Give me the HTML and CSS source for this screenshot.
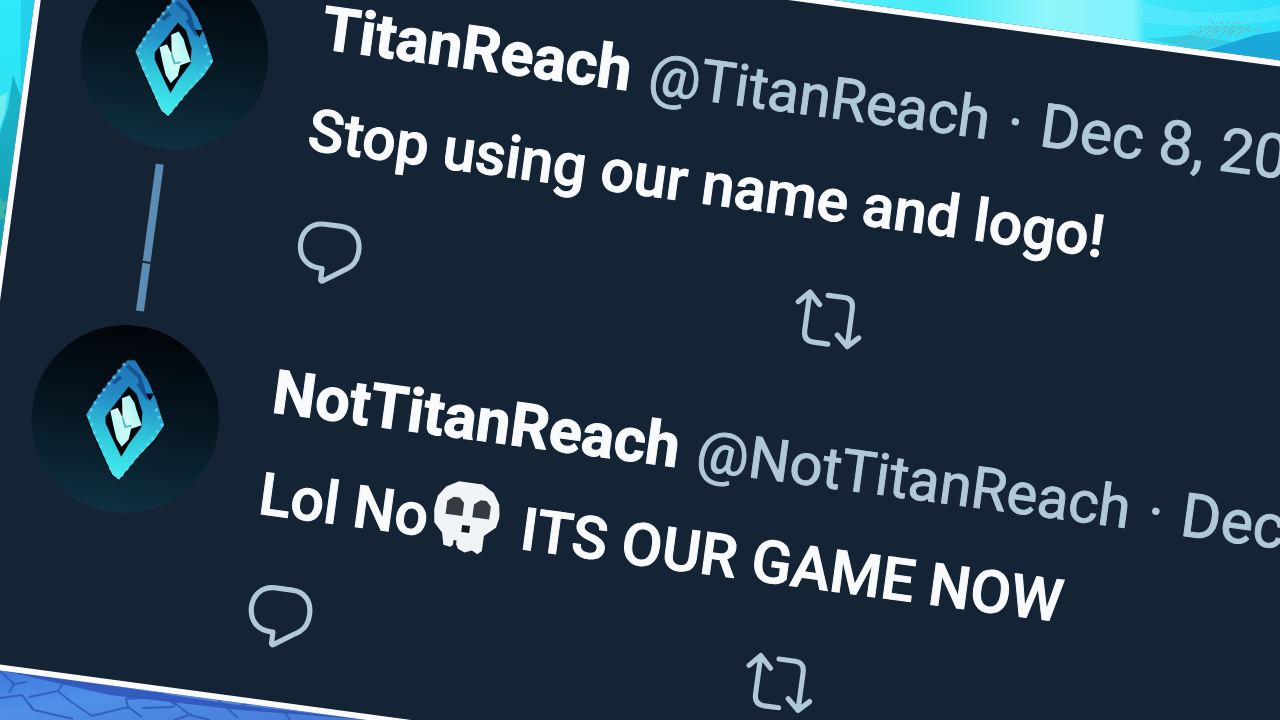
FILE: index.html
```html
<!DOCTYPE html>
<html lang="en">
<head>
<meta charset="utf-8">
<title>TitanReach thread</title>
<link rel="stylesheet" href="styles.css">
</head>
<body>
<svg class="symbols" aria-hidden="true">
  <defs>
    <linearGradient id="night" x1="0" y1="0" x2="0" y2="1"><stop offset="0" stop-color="#010509"/><stop offset=".35" stop-color="#04111a"/><stop offset=".75" stop-color="#0a2330"/><stop offset="1" stop-color="#103042"/></linearGradient>
    <linearGradient id="gem" x1="0" y1="0" x2="0" y2="1"><stop offset="0" stop-color="#2272b5"/><stop offset=".3" stop-color="#2389c4"/><stop offset=".62" stop-color="#2fc5dc"/><stop offset="1" stop-color="#43f0f0"/></linearGradient>
    <linearGradient id="blade" x1="1" y1="0" x2="0" y2="1"><stop offset="0" stop-color="#8deef0"/><stop offset=".5" stop-color="#d5fbf5"/><stop offset="1" stop-color="#9ff4f4"/></linearGradient>
  </defs>
  <symbol id="logo" viewBox="-94 -94 188 188">
    <circle r="94" fill="url(#night)"/>
    <path d="M-6-59 L2-60 L18-41 L28-24 L40 1 L32 17 L18 36 L2 62 L-6 57 L-18 38 L-30 19 L-40 1 L-31-18 L-19-39Z" fill="url(#gem)" stroke="#02080d" stroke-width="1"/>
    <path d="M-5-53 L8-44 L14-31 M8-37 L20-23 M-17-34 L-10-41" fill="none" stroke="#155391" stroke-width="4"/>
    <path d="M-8-55 L-18-38 L-30-18 L-37 1 L-29 17 L-17 36 L-5 56 L3 58 L17 35 L31 13 L37 1 L27-18" fill="none" stroke="#6adced" stroke-width="3" stroke-dasharray="3 5" opacity=".7"/>
    <path d="M-1-33 L8-26 L16-9 L17 6 L7 24 L1 38 L-7 26 L-19 7 L-20 0 L-9-19Z M17-28 L25-29 L22-21Z" fill="#01070c"/>
    <path d="M-16-6 L-9-10 L-3-1 L-6-20 L1-24 L7-17 L10-10 L17 4 L7 9 L6 20 L0 28 L-6 21 L-10 11Z" fill="url(#blade)"/>
    <path d="M-3-1 L1 8 L7 6" fill="none" stroke="#50bfc6" stroke-width="2"/>
  </symbol>
  <symbol id="reply" viewBox="0 -2 70 70">
    <path d="M26 7 H42 C55 7 62 16 62 28 C62 38 59 44 50 49 L31 62 Q29 63 29 60 V50 H27 C13 50 5 41 5 28 C5 16 13 7 26 7Z" fill="none" stroke="currentColor" stroke-width="5" stroke-linejoin="round"/>
  </symbol>
  <symbol id="repeat" viewBox="0 -2 70 70">
    <path d="M4 20 L14 9 L25 20 M14 11 V47 Q14 57 24 57 H38 M32 10 H48 Q57 10 57 20 V56 M46 47 L57 57 L67 47" fill="none" stroke="currentColor" stroke-width="5" stroke-linecap="round" stroke-linejoin="round"/>
  </symbol>
</svg>

<svg class="scene" viewBox="0 0 1280 720" preserveAspectRatio="xMidYMid slice" aria-hidden="true">
  <defs>
    <linearGradient id="left" x1="0" y1="0" x2="0" y2="1"><stop offset="0" stop-color="#2ce9fb"/><stop offset=".35" stop-color="#2ee2f3"/><stop offset=".65" stop-color="#19aec4"/><stop offset="1" stop-color="#178f9c"/></linearGradient>
    <linearGradient id="sky"><stop offset="0" stop-color="#55f0fb"/><stop offset=".35" stop-color="#49ecf8"/><stop offset=".55" stop-color="#8ff5fa"/><stop offset=".72" stop-color="#80f3fa"/><stop offset=".74" stop-color="#3fe6f8"/><stop offset="1" stop-color="#2de1f8"/></linearGradient>
    <linearGradient id="stone" x1="0" y1="0" x2="1" y2="1"><stop offset="0" stop-color="#3c76d8"/><stop offset=".45" stop-color="#4f90e8"/><stop offset="1" stop-color="#4678d4"/></linearGradient>
  </defs>
  <path d="M0 0H60V310H0Z" fill="url(#left)"/>
  <path d="M21 0H60V180L20 150Z" fill="#1fc4e6" opacity=".65"/>
  <path d="M0 96 L8 92 L5 112 L0 128Z" fill="#8ceff0" opacity=".7"/>
  <path d="M0 133 L8 108 L13 75 L20 94 L40 130 V310 H0Z" fill="#149fb5" opacity=".72"/>
  <path d="M0 197 L4 203 L7 199 L6 208 L3 211 L6 218 L0 220Z" fill="#38b3a8"/>
  <path d="M760 0H1280V70H760Z" fill="url(#sky)"/>
  <path d="M1140 2 Q1210 22 1280 5 V20 Q1205 31 1140 22Z" fill="#7befff" opacity=".3"/>
  <path d="M1200 52 L1230 43 L1255 35 L1280 31 V70H1180Z" fill="#1aa7d9"/>
  <path d="M1147 39 L1190 35 L1235 42 L1200 50Z" fill="#31bad8" opacity=".6"/>
  <path d="M1187 36H1244M1192 31H1264M1200 27H1254M1212 23H1245M1175 41H1222M1190 33H1240M1205 29H1260" stroke="#74b8bd" stroke-width="2" stroke-dasharray="2 3 1 2 3 5" opacity=".8"/>
  <path d="M0 660H380V720H0Z" fill="url(#stone)"/>
  <path d="M0 670 L120 687 L230 704 L370 720 L240 710 L110 695Z" fill="#2747b0" opacity=".7"/>
  <g fill="none" stroke="#2f59bb" stroke-width="2" opacity=".85">
    <path d="M0 671 L14 684 L27 682 M0 698 L22 695 L34 710 L73 719 M14 684 L9 693 M29 697 L58 691 L70 701 L92 716 L128 707 L126 699 L160 697 M22 695 L33 710 M58 691 L65 680 M126 699 L142 692 L163 694 L190 715 L210 720 M142 708 L174 707 M163 694 L176 706 M128 707 L142 717 M218 700 L238 718 M232 708 L254 702 M284 711 L290 720 M174 720 L192 714"/>
  </g>
</svg>

<main class="card">
  <article class="tweet">
    <div class="rail">
      <svg class="avatar" role="img" aria-label="TitanReach logo"><use href="#logo"/></svg>
      <span class="thread"></span>
    </div>
    <div class="content">
      <header class="byline"><strong class="name">TitanReach</strong><span>@TitanReach</span><span class="dot">·</span><time>Dec 8, 20</time></header>
      <p class="message">Stop using our name and logo!</p>
      <div class="actions">
        <button class="action" aria-label="Reply"><svg class="icon"><use href="#reply"/></svg></button>
        <button class="action" aria-label="Retweet"><svg class="icon"><use href="#repeat"/></svg></button>
      </div>
    </div>
  </article>
  <article class="tweet answer">
    <div class="rail">
      <span class="stub"></span>
      <svg class="avatar" role="img" aria-label="NotTitanReach logo"><use href="#logo"/></svg>
    </div>
    <div class="content">
      <header class="byline"><strong class="name">NotTitanReach</strong><span>@NotTitanReach</span><span class="dot">·</span><time>Dec</time></header>
      <p class="message">Lol No<svg class="skull" viewBox="0 0 66 72" role="img" aria-label="skull"><path d="M21 1H45L57 8L64 19L66 31L64 42L53 52V67L49 71L43 68L36 71L29 68L26 63L21 67L14 66L11 54L2 45L0 31L2 18L9 8Z" fill="#f1f4f6"/><path d="M12 22L18 17H24L29 22V35H12ZM39 22L45 17H51L56 22V35H39Z" fill="#343b42"/><path d="M30 44H38V51H30Z" fill="#101820"/><path d="M25 60V67" stroke="#152434" stroke-width="3"/></svg> ITS OUR GAME NOW</p>
      <div class="actions">
        <button class="action" aria-label="Reply"><svg class="icon"><use href="#reply"/></svg></button>
        <button class="action" aria-label="Retweet"><svg class="icon"><use href="#repeat"/></svg></button>
      </div>
    </div>
  </article>
</main>
</body>
</html>
```
FILE: styles.css
```css
* {
  box-sizing: border-box;
}

body {
  margin: 0;
  min-height: 100vh;
  overflow: hidden;
  display: flow-root;
  background: #2ce0f4;
  font-family: Roboto, "Liberation Sans", sans-serif;
}

.symbols {
  position: absolute;
  width: 0;
  height: 0;
}

.scene {
  position: absolute;
  inset: 0;
  width: 100%;
  height: 100%;
}

.card {
  position: relative;
  width: 112vw;
  margin: -106px 0 0 49px;
  padding: 43px 0 50px 46px;
  border: 6px solid #fbfbfd;
  background: #152434;
  color: #f8fafc;
  transform: rotate(7.7deg);
  transform-origin: top left;
}

.tweet {
  display: flex;
  gap: 49px;
}

.rail {
  flex: none;
  display: flex;
  flex-direction: column;
  align-items: center;
}

.avatar {
  width: 188px;
  height: 188px;
}

.thread,
.stub {
  width: 8px;
  background: #5c8bb3;
}

.thread {
  flex: 1;
  margin: 16px 0 2px;
}

.stub {
  height: 48px;
  margin-bottom: 15px;
}

.content {
  flex: 1;
  padding-top: 7px;
}

.answer .content {
  padding-top: 70px;
}

.byline,
.message {
  font-size: 59px;
  line-height: 80px;
  white-space: nowrap;
}

.byline {
  display: flex;
  align-items: baseline;
  gap: 18px;
  font-size: 58px;
  color: #b1c8d8;
  -webkit-text-stroke: 1px currentColor;
}

.byline time {
  font-size: 61px;
}

.name {
  font-size: 61px;
  font-weight: 700;
  color: #f8fafc;
}

.message {
  margin: 22px 0 42px;
  font-weight: 500;
  -webkit-text-stroke: 1px currentColor;
}

.skull {
  width: 66px;
  height: 72px;
  margin-left: 5px;
  margin-right: 8px;
  vertical-align: -12px;
}

.actions {
  display: grid;
  grid-template-columns: repeat(2, 502px);
  padding-left: 2px;
}

.action {
  justify-self: start;
  display: flex;
  padding: 0;
  border: 0;
  background: none;
  color: #b1c8d8;
}

.icon {
  width: 72px;
  height: 72px;
}
```
